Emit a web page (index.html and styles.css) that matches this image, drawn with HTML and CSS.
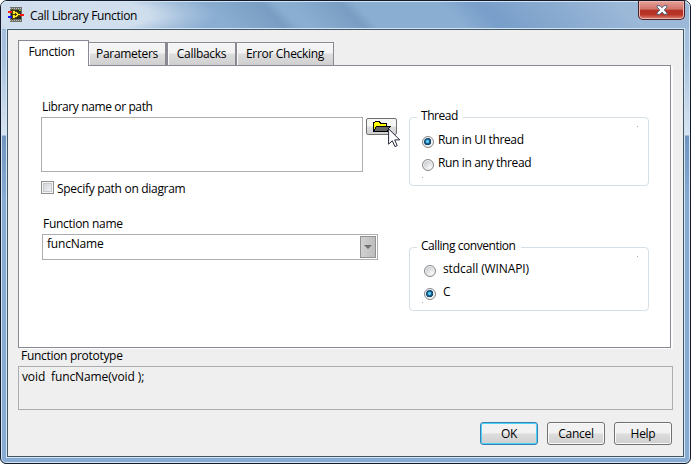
FILE: index.html
```html
<!DOCTYPE html>
<html lang="en">
<head>
<meta charset="utf-8">
<title>Call Library Function</title>
<link rel="stylesheet" href="styles.css">
</head>
<body>
<div class="window">
  <header class="titlebar">
    <svg class="app-icon" width="16" height="15" viewBox="0 0 16 15" shape-rendering="crispEdges">
      <path d="M2 0h12v15H2z" fill="#6e6f66"/>
      <path d="M3 3h10v9H3z" fill="#292923"/>
      <path d="M2 1.500h12M2 13.500h12" stroke="#c8c8ba" stroke-dasharray="1 1"/>
      <path d="M4.500 2.500l8.500 5-8.500 5z" fill="#ffe82b" stroke="#514600"/>
      <path d="M5 7.500h4M7.500 6v3" stroke="#403800"/>
      <path d="M0 5h4M12 7.500h4" stroke="#ff1717" stroke-width="2"/>
      <path d="M0 9.500h4" stroke="#1616ff" stroke-width="2"/>
      <path d="M11 3.500h2" stroke="#80d61b"/>
    </svg>
    <h1 class="title">Call Library Function</h1>
    <button class="close" aria-label="Close">
      <svg width="12" height="10" viewBox="0 0 12 10"><path d="M1 .7h3L6 2.800 8 .7h3v1.200L8.300 5 11 8.100v1.200H8L6 7.100 4 9.300H1V8.100L3.700 5 1 1.900z" fill="#fff" stroke="#53637c"/></svg>
    </button>
  </header>
  <main class="client">
    <nav class="tabs">
      <span class="tab active"><span class="t">Function</span></span>
      <span class="tab parameters"><span class="t">Parameters</span></span>
      <span class="tab callbacks"><span class="t">Callbacks</span></span>
      <span class="tab errors"><span class="t">Error Checking</span></span>
    </nav>
    <section class="pane">
      <div class="left">
        <div class="label path-label">Library name or path</div>
        <div class="path-row">
          <div class="path-box"></div>
          <button class="browse" aria-label="Browse">
            <svg class="folder" width="19" height="13" viewBox="0 0 19 13" shape-rendering="crispEdges">
              <path d="M1.500 11V3l2-1.500h4l1 2h6v4H5z" fill="#ff0" stroke="#000"/>
              <path d="M4.500 6.500h13.500l-3 5H1.500z" fill="#666" stroke="#000"/>
            </svg>
            <svg class="cursor" width="13" height="20" viewBox="0 0 13 20"><path d="M.6.8v15.400l3.700-3.400 2.600 5.800 2.300-1-2.500-5.700h5z" fill="#fff" stroke="#252b3d"/></svg>
          </button>
        </div>
        <div class="check-row"><span class="checkbox"></span><span>Specify path on diagram</span></div>
        <div class="label fn-label">Function name</div>
        <div class="combo"><span>funcName</span><span class="arrow"></span></div>
      </div>
      <div class="right">
        <div class="group thread">
          <span class="legend">Thread</span>
          <div class="option"><span class="radio on"></span><span>Run in UI thread</span></div>
          <div class="option"><span class="radio"></span><span>Run in any thread</span></div>
        </div>
        <div class="group calling">
          <span class="legend">Calling convention</span>
          <div class="option"><span class="radio"></span><span class="stdcall">stdcall (WINAPI)</span></div>
          <div class="option"><span class="radio on"></span><span>C</span></div>
        </div>
      </div>
    </section>
    <div class="label proto-label">Function prototype</div>
    <div class="prototype">void  funcName(void );</div>
    <footer class="actions">
      <button class="btn default">OK</button>
      <button class="btn">Cancel</button>
      <button class="btn">Help</button>
    </footer>
  </main>
</div>
</body>
</html>
```
FILE: styles.css
```css
* { box-sizing: border-box; }
body {
  margin: 0;
  background: #fff;
  color: #000;
  font: 12px/16px "Open Sans", "Noto Sans", sans-serif;
  letter-spacing: -0.3px;
  overflow: hidden;
}
button { font: inherit; letter-spacing: inherit; color: inherit; padding: 0; margin: 0; }
.window {
  width: 691px;
  height: 464px;
  border: 1px solid #151a28;
  border-radius: 7px 7px 6px 6px;
  padding: 0 6px 6px;
  box-shadow: inset 0 0 0 1px #d3e4f4;
  background:
    linear-gradient(45deg, transparent 0 32%, #7093b9a0 40%, transparent 42% 44%, #7093b9a0 51%, transparent 53% 65%, #6d95c4a0 70%, #a9c1dc90 90%) 0 0 / 100% 29px no-repeat,
    linear-gradient(#8aadd2 0, #8aadd2 28px, #a4c0dd 29px, #a4c0dd 50px, #d8e4f0 134px, #7096bf 135px, #88abd2 200px, #88abd2);
}
.titlebar {
  height: 28px;
  margin: 0 -6px;
  padding-left: 7px;
  display: flex;
  align-items: flex-start;
  background: radial-gradient(ellipse 150px 32px at 65px 14px, #d3e0ee 0, #cfdeed 55%, #bdd1e680 80%, transparent);
  border-radius: 6px 6px 0 0;
  box-shadow: inset 0 1px #d3e4f4;
}
.app-icon { margin-top: 6px; }
.title {
  flex: 1;
  margin: 6px 0 0 6px;
  font-size: 12px;
  line-height: 17px;
  font-weight: 400;
  letter-spacing: -0.34px;
}
.close {
  display: flex;
  justify-content: center;
  width: 47px;
  height: 19px;
  margin-right: 5px;
  padding-top: 4px;
  border: 1px solid #4a2029;
  border-top: 0;
  border-radius: 0 0 5px 5px;
  box-shadow: inset 0 0 0 1px #efb5ae;
  background: linear-gradient(#e4a29a, #cf7267 46%, #b33126 50%, #b93426 75%, #d98472);
}
.client {
  height: 428px;
  border: 1px solid #415666;
  outline: 1px solid #d5e5f2;
  padding: 10px 10px 0;
  background: #efefef;
}
.tabs { display: flex; align-items: flex-end; height: 25px; }
.tab {
  height: 23px;
  border: 1px solid #898994;
  border-bottom: 0;
  background: linear-gradient(#f3f3f3 0 45%, #dedede 50%, #cfcfcf);
  box-shadow: inset 1px 1px #fafafa;
  text-align: center;
  padding-top: 3px;
}
.tab.active {
  width: 71px;
  height: 26px;
  margin-bottom: -1px;
  background: #fff;
  position: relative;
}
.active .t { position: relative; left: -2px; }
.parameters { width: 77px; border-left: 0; }
.callbacks { width: 70px; border-left-width: 2px; }
.errors { width: 98px; }
.pane {
  width: 653px;
  height: 283px;
  display: flex;
  border: 1px solid #898994;
  background: #fff;
  box-shadow: 2px 1px #fcfcfc;
}
.left { width: 390px; padding: 33px 0 0 22px; }
.label { height: 16px; padding-left: 1px; }
.path-label { letter-spacing: -0.38px; }
.path-row { display: flex; gap: 3px; margin-top: 2px; }
.path-box { width: 322px; height: 55px; border: 1px solid #abadb3; }
.browse {
  position: relative;
  width: 31px;
  height: 17px;
  margin-top: 1px;
  border: 1px solid #707070;
  border-radius: 2px;
  background: linear-gradient(#f5f5f5 48%, #dddddd 52%, #d0d0d0);
}
.folder { position: absolute; left: 5px; top: 1px; }
.cursor { position: absolute; left: 21px; top: 9px; }
.check-row { display: flex; gap: 3px; margin-top: 9px; }
.checkbox {
  width: 13px;
  height: 13px;
  border: 1px solid #8e8f8f;
  background: linear-gradient(135deg, #cbcfd5, #f8f8f8);
  box-shadow: inset 0 0 0 1px #f4f4f4, inset 0 0 0 2px #c6cacf;
}
.fn-label { margin-top: 19px; padding-left: 2px; }
.combo {
  display: flex;
  justify-content: space-between;
  width: 336px;
  height: 26px;
  margin: 2px 0 0 1px;
  padding: 1px 1px 0 4px;
  border: 1px solid #abadb3;
  letter-spacing: -0.2px;
}
.arrow {
  display: flex;
  align-items: center;
  justify-content: center;
  width: 16px;
  height: 22px;
  border: 1px solid #919191;
  background: linear-gradient(90deg, #d1d1d1, #bdbdbd);
}
.arrow::after { content: ""; border: 4px solid transparent; border-bottom: 0; border-top-color: #707070; }
.right { width: 240px; padding-top: 51px; }
.group { position: relative; border: 1px solid #d5dfe5; border-radius: 4px; }
.group::before, .group::after { content: ""; position: absolute; width: 1px; height: 1px; background: #aaa; }
.group::before { right: 10px; top: 8px; }
.group::after { left: 12px; bottom: 7px; }
.legend { position: absolute; left: 7px; top: -10px; padding: 0 5px 0 4px; background: #fff; letter-spacing: -0.45px; }
.thread { height: 69px; padding: 14px 0 0 12px; }
.calling { height: 64px; margin-top: 61px; padding: 13px 0 0 14px; }
.option { display: flex; height: 23px; gap: 4px; letter-spacing: -0.35px; }
.calling .option { gap: 7px; }
.stdcall { letter-spacing: -0.1px; }
.radio {
  flex: none;
  width: 12px;
  height: 12px;
  margin-top: 4px;
  border: 1px solid #858789;
  border-radius: 50%;
  background: radial-gradient(circle at 70% 75%, #fafafa, #c8cbce 75%);
  box-shadow: inset 0 0 0 1px #f5f5f5;
}
.radio.on { background: radial-gradient(circle at 45% 45%, #63d3f4 0 1px, #14669b 2px, #123a5c 3.500px, #e9eef1 4px); }
.proto-label { padding-left: 3px; height: 18px; }
.prototype {
  width: 655px;
  height: 44px;
  padding: 2px 3px;
  border: 1px solid #abadb3;
  white-space: pre;
  letter-spacing: -0.12px;
}
.actions { display: flex; justify-content: flex-end; gap: 9px; margin: 12px 1px 0 0; }
.btn {
  width: 58px;
  height: 23px;
  border: 1px solid #707070;
  border-radius: 3px;
  box-shadow: inset 0 0 0 1px #fafafa;
  background: linear-gradient(#f2f2f2 0 47%, #dddddd 52%, #cfcfcf);
}
.btn.default { border-color: #3c7fb1; box-shadow: inset 0 0 0 1px #48d2f7; }
```
